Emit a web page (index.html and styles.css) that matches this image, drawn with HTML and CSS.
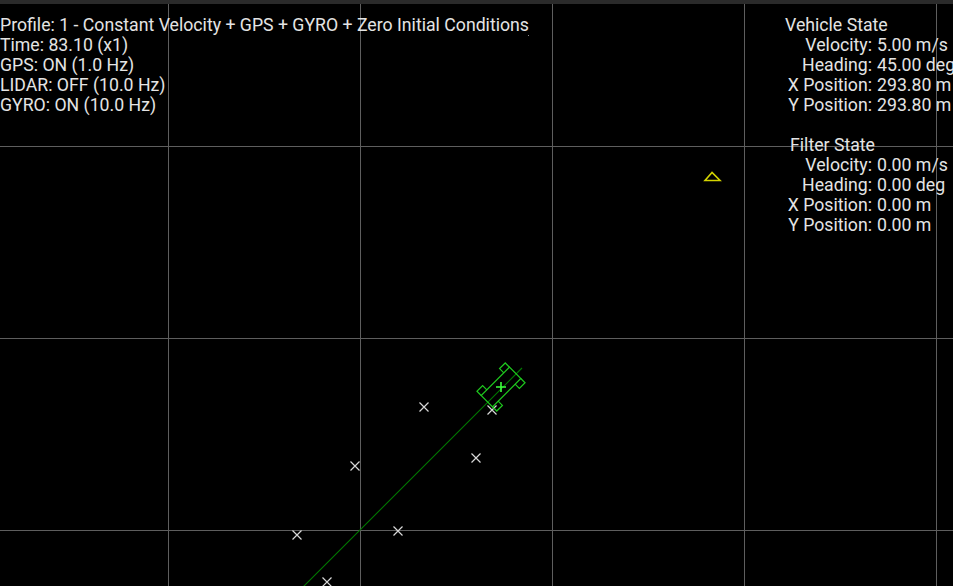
FILE: index.html
```html
<!DOCTYPE html>
<html>
<head>
<meta charset="utf-8">
<link rel="stylesheet" href="styles.css">
</head>
<body>
<div class="topbar"></div>
<div class="stage">
  <svg class="canvas" width="953" height="582" viewBox="0 4 953 582" xmlns="http://www.w3.org/2000/svg">
    <g class="grid" stroke="#5e5e5e" stroke-width="1" shape-rendering="crispEdges">
      <line x1="168.5" y1="4" x2="168.5" y2="586"/>
      <line x1="360.5" y1="4" x2="360.5" y2="586"/>
      <line x1="552.5" y1="4" x2="552.5" y2="586"/>
      <line x1="744.5" y1="4" x2="744.5" y2="586"/>
      <line x1="936.5" y1="4" x2="936.5" y2="586"/>
      <line x1="0" y1="146.5" x2="953" y2="146.5"/>
      <line x1="0" y1="338.5" x2="953" y2="338.5"/>
      <line x1="0" y1="530.5" x2="953" y2="530.5"/>
    </g>
    <rect x="528" y="35" width="1" height="1" fill="#888"/>
    <line x1="303" y1="587" x2="522" y2="368" stroke="#007a00" stroke-width="1.1"/>
    <g stroke="#d8d8d8" stroke-width="1.2">
      <path d="M419.5 402.5l9 9M428.5 402.5l-9 9"/>
      <path d="M487.5 405.5l9 9M496.5 405.5l-9 9"/>
      <path d="M471.5 453.5l9 9M480.5 453.5l-9 9"/>
      <path d="M350.5 461.5l9 9M359.5 461.5l-9 9"/>
      <path d="M393.5 526.5l9 9M402.5 526.5l-9 9"/>
      <path d="M292.5 530.5l9 9M301.5 530.5l-9 9"/>
      <path d="M322.5 577.5l9 9M331.5 577.5l-9 9"/>
    </g>
    <g transform="translate(501 387) rotate(-45)" stroke="#1ec81e" stroke-width="1.2" fill="none">
      <rect x="-20" y="-8" width="40" height="16"/>
      <path d="M-20 -8v-6h8v6M12 -8v-6h8v6M-20 8v6h8v-6M12 8v6h8v-6"/>
      <path d="M-5 0h10M0 -5v10" stroke="#3cff3c" stroke-width="1.6" transform="rotate(45)"/>
    </g>
    <path d="M712 172.5L705 180.5H720Z" stroke="#d4d400" stroke-width="1.6" fill="none"/>
  </svg>
  <div class="info">
    <div>Profile: 1 - Constant Velocity + GPS + GYRO + Zero Initial Conditions</div>
    <div>Time: 83.10 (x1)</div>
    <div>GPS: ON (1.0 Hz)</div>
    <div>LIDAR: OFF (10.0 Hz)</div>
    <div>GYRO: ON (10.0 Hz)</div>
  </div>
  <div class="state">
    <div class="title vehicle">Vehicle State</div>
    <div class="rows">
      <span class="lbl">Velocity:</span><span class="val">5.00 m/s</span>
      <span class="lbl">Heading:</span><span class="val">45.00 deg</span>
      <span class="lbl">X Position:</span><span class="val">293.80 m</span>
      <span class="lbl">Y Position:</span><span class="val">293.80 m</span>
    </div>
    <div class="title filter">Filter State</div>
    <div class="rows">
      <span class="lbl">Velocity:</span><span class="val">0.00 m/s</span>
      <span class="lbl">Heading:</span><span class="val">0.00 deg</span>
      <span class="lbl">X Position:</span><span class="val">0.00 m</span>
      <span class="lbl">Y Position:</span><span class="val">0.00 m</span>
    </div>
  </div>
</div>
</body>
</html>
```
FILE: styles.css
```css
html, body {
  margin: 0;
  padding: 0;
  background: #000;
  width: 953px;
  height: 586px;
  overflow: hidden;
}
body {
  font-family: Roboto, "Liberation Sans", sans-serif;
  font-size: 17.7px;
  color: #e4e4e4;
}
.topbar {
  height: 4px;
  background: #2a2a2a;
}
.stage {
  position: relative;
  width: 953px;
  height: 582px;
  overflow: hidden;
}
.canvas {
  display: block;
}
.info {
  position: absolute;
  left: 0;
  top: 11px;
  line-height: 20px;
  white-space: nowrap;
}
.state {
  position: absolute;
  left: 785px;
  top: 11px;
  line-height: 20px;
  white-space: nowrap;
}
.title.filter {
  margin-top: 20px;
  padding-left: 5px;
}
.rows {
  display: grid;
  grid-template-columns: 87px auto;
  column-gap: 5px;
}
.lbl {
  text-align: right;
}
```
